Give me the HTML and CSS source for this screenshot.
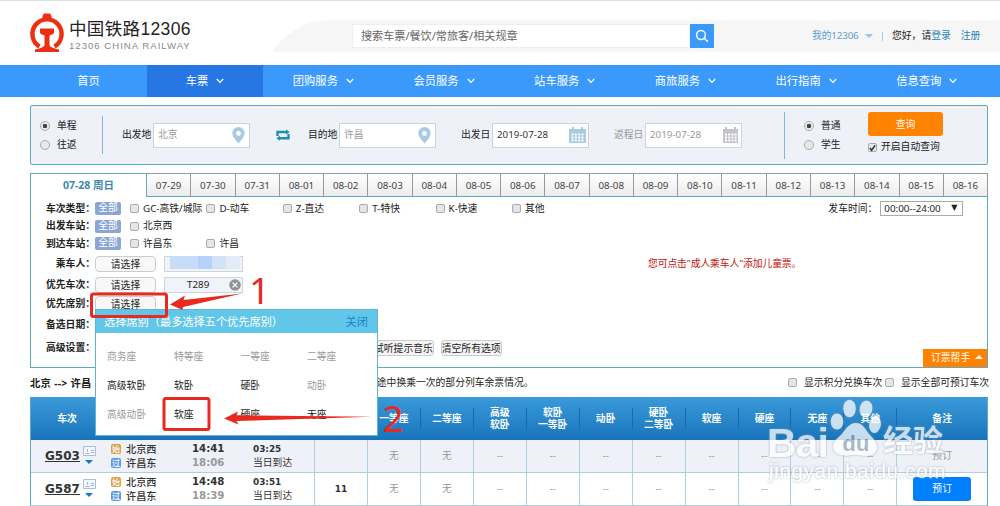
FILE: index.html
```html
<!DOCTYPE html>
<html lang="zh-CN">
<head>
    <meta charset="UTF-8">
    <meta name="viewport" content="width=device-width, initial-scale=1.0">
    <title>中国铁路12306</title>
    <link rel="stylesheet" href="styles.css">
</head>
<body>
    <div class="page">
        <header class="header">
            <div class="logo">
                <svg class="logo-icon" width="36" height="40" viewBox="0 0 36 40">
                    <path d="M10.500 33.500A14.600 14.600 0 1 1 25.500 33.500" fill="none" stroke="#ee2e12" stroke-width="4.400"/>
                    <path d="M15 .500h6l1.500 2.500v3h-9V3z" fill="#ee2e12"/>
                    <path d="M11 15.500h14v4q0 1.500-2 2l-2.500 1v10q1.500 2.500 9.500 4v2.500H6v-2.500q8-1.500 9.500-4v-10l-2.500-1q-2-.5-2-2z" fill="#ee2e12"/>
                </svg>
                <div class="logo-text">
                    <div class="logo-cn">中国铁路12306</div>
                    <div class="logo-en">12306 CHINA RAILWAY</div>
                </div>
            </div>
            <div class="header-band">
                <svg class="swoosh" width="80" height="32" viewBox="0 0 80 32"><path d="M0 32Q6 20 30 6Q40 0 64 0H80V32z" fill="#f6f6f6"/></svg>
                <div class="search">
                    <div class="search-input">搜索车票/餐饮/常旅客/相关规章</div>
                    <div class="search-btn">
                        <svg width="14" height="14" viewBox="0 0 14 14" fill="none" stroke="#fff" stroke-width="1.500"><circle cx="6" cy="6" r="4.400"/><path d="M9.200 9.200l3.600 3.600"/></svg>
                    </div>
                </div>
                <div class="user">
                    <span class="my">我的12306</span><i class="caret"></i><span class="sep"></span><span>您好，请</span><a>登录</a><a class="reg">注册</a>
                </div>
            </div>
        </header>

        <nav class="nav">
            <div class="nav-item home">首页</div>
            <div class="nav-item active">车票<svg class="chev" viewBox="0 0 8 6"><path d="M.8 1L4 4.400 7.200 1"/></svg></div>
            <div class="nav-item">团购服务<svg class="chev" viewBox="0 0 8 6"><path d="M.8 1L4 4.400 7.200 1"/></svg></div>
            <div class="nav-item">会员服务<svg class="chev" viewBox="0 0 8 6"><path d="M.8 1L4 4.400 7.200 1"/></svg></div>
            <div class="nav-item">站车服务<svg class="chev" viewBox="0 0 8 6"><path d="M.8 1L4 4.400 7.200 1"/></svg></div>
            <div class="nav-item">商旅服务<svg class="chev" viewBox="0 0 8 6"><path d="M.8 1L4 4.400 7.200 1"/></svg></div>
            <div class="nav-item">出行指南<svg class="chev" viewBox="0 0 8 6"><path d="M.8 1L4 4.400 7.200 1"/></svg></div>
            <div class="nav-item">信息查询<svg class="chev" viewBox="0 0 8 6"><path d="M.8 1L4 4.400 7.200 1"/></svg></div>
        </nav>

        <section class="query">
            <div class="radios trip">
                <label><i class="radio on"></i>单程</label>
                <label><i class="radio"></i>往返</label>
            </div>
            <div class="field from">
                <span>出发地</span>
                <div class="box">北京<svg class="pin" width="13" height="17" viewBox="0 0 13 17"><path fill-rule="evenodd" d="M6.500 0A6.200 6.200 0 0 1 12.700 6.200Q12.700 10 6.500 16.500Q.3 10 .3 6.200A6.200 6.200 0 0 1 6.500 0zM6.500 4a2.400 2.400 0 1 0 0 4.800a2.400 2.400 0 1 0 0-4.800z" fill="#a9cbe6"/></svg></div>
            </div>
            <svg class="swap" width="14" height="12" viewBox="0 0 14 12"><path d="M1.500 7V3H10.500M12.500 5v4.200H3.500" fill="none" stroke="#1f8fb0" stroke-width="2.400"/><path d="M10 .5L13.700 3 10 5.500zM4 6.700L.3 9.200 4 11.700z" fill="#1f8fb0"/></svg>
            <div class="field to">
                <span>目的地</span>
                <div class="box">许昌<svg class="pin" width="13" height="17" viewBox="0 0 13 17"><path fill-rule="evenodd" d="M6.500 0A6.200 6.200 0 0 1 12.700 6.200Q12.700 10 6.500 16.500Q.3 10 .3 6.200A6.200 6.200 0 0 1 6.500 0zM6.500 4a2.400 2.400 0 1 0 0 4.800a2.400 2.400 0 1 0 0-4.800z" fill="#a9cbe6"/></svg></div>
            </div>
            <div class="field date">
                <span>出发日</span>
                <div class="box dark">2019-07-28<svg class="cal" width="17" height="17" viewBox="0 0 17 17"><path d="M0 2h17v14H0zM3 0h2v3H3zM12 0h2v3h-2z" fill="#a9cbe0"/><path d="M2.500 7.500h12M2.500 10.500h12M2.500 13.500h12" stroke="#fff" stroke-width="1.800" stroke-dasharray="2 1.300"/></svg></div>
            </div>
            <div class="field back">
                <span>返程日</span>
                <div class="box">2019-07-28<svg class="cal" width="17" height="17" viewBox="0 0 17 17"><path d="M1 2h15v14H1zM3 0h2v3H3zM12 0h2v3h-2z" fill="#c2c2d0"/><path d="M3 7.500h12M3 10.500h12M3 13.500h12" stroke="#fff" stroke-width="1.800" stroke-dasharray="2 1.200"/></svg></div>
            </div>
            <div class="radios kind">
                <label><i class="radio on"></i>普通</label>
                <label><i class="radio"></i>学生</label>
            </div>
            <div class="submit">
                <div class="query-btn">查询</div>
                <label><i class="check"><svg width="8" height="8" viewBox="0 0 8 8"><path d="M1 4l2 2.500L7 1" fill="none" stroke="#333" stroke-width="1.800"/></svg></i>开启自动查询</label>
            </div>
        </section>

        <div class="tabs">
            <div class="tab current">07-28 周日</div>
            <div class="tab">07-29</div><div class="tab">07-30</div><div class="tab">07-31</div><div class="tab">08-01</div><div class="tab">08-02</div><div class="tab">08-03</div><div class="tab">08-04</div><div class="tab">08-05</div><div class="tab">08-06</div><div class="tab">08-07</div><div class="tab">08-08</div><div class="tab">08-09</div><div class="tab">08-10</div><div class="tab">08-11</div><div class="tab">08-12</div><div class="tab">08-13</div><div class="tab">08-14</div><div class="tab">08-15</div><div class="tab">08-16</div>
        </div>

        <section class="filters">
            <div class="row">
                <b>车次类型：</b><span class="all">全部</span>
                <label><i class="check"></i>GC-高铁/城际</label>
                <label><i class="check"></i>D-动车</label>
                <label><i class="check"></i>Z-直达</label>
                <label><i class="check"></i>T-特快</label>
                <label><i class="check"></i>K-快速</label>
                <label><i class="check"></i>其他</label>
                <div class="depart">发车时间：<div class="select">00:00--24:00<span>▼</span></div></div>
            </div>
            <div class="row">
                <b>出发车站：</b><span class="all">全部</span>
                <label><i class="check"></i>北京西</label>
            </div>
            <div class="row">
                <b>到达车站：</b><span class="all">全部</span>
                <label><i class="check"></i>许昌东</label>
                <label><i class="check"></i>许昌</label>
            </div>
            <div class="row r4">
                <b>乘车人：</b><span class="pick">请选择</span>
                <div class="chosen masked"><i></i><i></i><i></i><i></i><i></i></div>
                <span class="tip">您可点击"成人乘车人"添加儿童票。</span>
            </div>
            <div class="row r5">
                <b>优先车次：</b><span class="pick">请选择</span>
                <div class="chosen">T289<svg width="12" height="12" viewBox="0 0 12 12"><circle cx="6" cy="6" r="5.800" fill="#929292"/><path d="M3.600 3.600l4.800 4.800M8.400 3.600L3.600 8.400" stroke="#fff" stroke-width="1.300"/></svg></div>
            </div>
            <div class="row"><b>优先席别：</b><span class="pick">请选择</span></div>
            <div class="row r7"><b>备选日期：</b></div>
            <div class="row r8">
                <b>高级设置：</b>
                <span class="small-btn music">试听提示音乐</span>
                <span class="small-btn">清空所有选项</span>
            </div>
            <div class="helper">订票帮手<i></i></div>
        </section>

        <div class="summary">
            <b>北京 --&gt; 许昌</b>
            <span class="transfer">如途中换乘一次的部分列车余票情况。</span>
            <label><i class="check"></i>显示积分兑换车次</label>
            <label><i class="check"></i>显示全部可预订车次</label>
        </div>

        <div class="table">
            <div class="thead">
                <div>车次</div><div></div><div></div><div></div><div></div>
                <div>一等座</div><div>二等座</div><div>高级<br>软卧</div><div>软卧<br>一等卧</div><div>动卧</div><div>硬卧<br>二等卧</div><div>软座</div><div>硬座</div><div>无座</div><div>其他</div><div>备注</div>
            </div>
            <div class="trow odd">
                <div class="train"><a>G503</a><span class="marks"><svg width="13" height="10" viewBox="0 0 13 10"><path d="M.5.5h12v9H.5z" fill="#f5f8ff" stroke="#a9bedb"/><path d="M2.500 7.500h4M4.500 3v3M8 4.500h3M8 6.500h3" stroke="#9db6d6" fill="none"/></svg><i></i></span></div>
                <div class="stations"><div><i class="start">始</i>北京西</div><div><i class="pass">过</i>许昌东</div></div>
                <div class="times"><div>14:41</div><div class="arrive">18:06</div></div>
                <div class="lasts"><div><b>03:25</b></div><div>当日到达</div></div>
                <div></div><div>无</div><div>无</div><div>--</div><div>--</div><div>--</div><div>--</div><div>--</div><div>--</div><div>--</div><div>--</div><div>预订</div>
            </div>
            <div class="trow">
                <div class="train"><a>G587</a><span class="marks"><svg width="13" height="10" viewBox="0 0 13 10"><path d="M.5.5h12v9H.5z" fill="#f5f8ff" stroke="#a9bedb"/><path d="M2.500 7.500h4M4.500 3v3M8 4.500h3M8 6.500h3" stroke="#9db6d6" fill="none"/></svg><i></i></span></div>
                <div class="stations"><div><i class="start">始</i>北京西</div><div><i class="pass">过</i>许昌东</div></div>
                <div class="times"><div>14:48</div><div class="arrive">18:39</div></div>
                <div class="lasts"><div><b>03:51</b></div><div>当日到达</div></div>
                <div class="count">11</div><div>无</div><div>无</div><div>--</div><div>--</div><div>--</div><div>--</div><div>--</div><div>--</div><div>--</div><div>--</div><div><span class="book">预订</span></div>
            </div>
        </div>

        <div class="popup">
            <div class="popup-head"><span>选择席别（最多选择五个优先席别）</span><a>关闭</a></div>
            <div class="seats">
                <span class="off">商务座</span><span class="off">特等座</span><span class="off">一等座</span><span class="off">二等座</span>
                <span>高级软卧</span><span>软卧</span><span>硬卧</span><span class="off">动卧</span>
                <span class="off">高级动卧</span><span>软座</span><span>硬座</span><span>无座</span>
            </div>
        </div>

        <!-- step marks -->
        <svg class="steps" width="1000" height="506" viewBox="0 0 1000 506">
            <g fill="none" stroke="#e8291f" stroke-width="3">
                <rect x="91.500" y="294" width="75" height="22.500" rx="2"/>
                <rect x="164" y="398.500" width="45" height="31" rx="2"/>
            </g>
            <g fill="#e8291f">
                <path d="M170 304.500L185 295.500 183.500 300 242 293.500 183 307 182.500 310z"/>
                <path d="M224 418.500L238 411.500 236.500 415.200 372 416.800 236.500 421 238.500 424.500z"/>
                <text x="249" y="304" class="num">1</text>
                <text x="382.500" y="432" class="num">2</text>
            </g>
        </svg>

        <div class="watermark">
            <div class="brand">
                <span class="bai">Bai</span>
                <svg width="51" height="58" viewBox="0 0 51 58" fill="#fff">
                    <ellipse cx="7" cy="22.500" rx="6.300" ry="8"/><ellipse cx="19.500" cy="9.500" rx="6.300" ry="8.800"/><ellipse cx="36" cy="10" rx="6.300" ry="8.500" transform="rotate(10 36 10)"/><ellipse cx="45" cy="25.500" rx="5.800" ry="8.500" transform="rotate(8 45 25.500)"/>
                    <path d="M26 24c7 0 9 6 13 11c6 6 9 10 8 15c-2 7-9 8-18 6q-3-.5-6 0c-10 2-18 0-20-7c-1-6 4-9 9-14c4-5 7-11 14-11z"/>
                    <text x="26" y="52" text-anchor="middle" class="du">du</text>
                </svg>
                <span class="jing">经验</span>
            </div>
            <div class="url">jingyan.baidu.com</div>
        </div>
    </div>
</body>
</html>
```
FILE: styles.css
```css
* {
    box-sizing: border-box;
}
body {
    margin: 0;
    font-family: "Noto Sans", "Noto Sans CJK SC", sans-serif;
    font-size: 9.8px;
    line-height: 12px;
    color: #222;
    background: #fff;
}
i {
    font-style: normal;
}
.page {
    position: relative;
    width: 1000px;
    height: 506px;
    overflow: hidden;
}
.header {
    display: flex;
    height: 65px;
    border-top: 1px solid #ddd;
}
.logo {
    display: flex;
    width: 272px;
    padding: 12px 0 0 29px;
}
.logo-text {
    padding: 5px 0 0 4px;
    white-space: nowrap;
}
.logo-cn {
    font-family: "Liberation Sans", "Noto Sans CJK SC", sans-serif;
    font-size: 17.5px;
    line-height: 22px;
    letter-spacing: 0.35px;
    color: #222;
}
.logo-en {
    font-family: "Liberation Sans", sans-serif;
    font-size: 9.6px;
    line-height: 12px;
    letter-spacing: 1px;
    color: #888;
}
.header-band {
    display: flex;
    align-items: center;
    width: 728px;
    height: 32px;
    margin-top: 19px;
    background: linear-gradient(90deg, #fff 79px, #f6f6f6 79px);
}
.search {
    display: flex;
    width: 362px;
    height: 24px;
}
.search-input {
    flex: 1;
    padding-left: 8px;
    border: 1px solid #eee;
    background: #fff;
    font-size: 11.1px;
    line-height: 22px;
    color: #666;
}
.search-btn {
    display: flex;
    align-items: center;
    justify-content: center;
    width: 24px;
    background: #3b99fc;
}
.user {
    display: flex;
    align-items: center;
    margin-left: 98px;
    white-space: nowrap;
}
.user .my {
    width: 47px;
    color: #5d9fd0;
    letter-spacing: -0.15px;
}
.user a {
    color: #2a83b8;
}
.user .reg {
    margin-left: 10px;
}
.caret {
    margin-left: 6px;
    border: 4px solid transparent;
    border-top-color: #9cc6e0;
    border-bottom: 0;
}
.sep {
    width: 1px;
    height: 9px;
    margin: 0 9px;
    background: #a9cfe6;
}
.nav {
    display: flex;
    height: 32px;
    background: #3b99fc;
    color: #fff;
    font-size: 11.3px;
}
.nav-item {
    display: flex;
    align-items: center;
    justify-content: center;
    width: 120.7px;
}
.nav-item.home {
    width: 147px;
    padding-left: 30px;
}
.nav-item.active {
    width: 116px;
    background: #2676e3;
}
.chev {
    width: 8px;
    height: 6px;
    margin-left: 8px;
    fill: none;
    stroke: #fff;
    stroke-width: 1.3;
}
.query {
    display: flex;
    align-items: center;
    width: 958px;
    height: 60px;
    margin: 8px 0 8px 30px;
    border: 1px solid #5fa9c6;
    border-radius: 2px;
    background: #eef1f8;
}
.query label {
    display: flex;
    align-items: center;
    white-space: nowrap;
}
.radios {
    display: flex;
    flex-direction: column;
    gap: 7px;
}
.trip {
    width: 72px;
    height: 38px;
    padding-left: 9px;
    border-right: 1px solid #7dbad3;
    justify-content: center;
}
.kind {
    height: 47px;
    width: 84px;
    margin-left: 42px;
    padding-left: 19px;
    border-left: 1px solid #7dbad3;
    justify-content: center;
}
.radio {
    width: 10px;
    height: 10px;
    margin-right: 7px;
    border: 1px solid #aaa;
    border-radius: 50%;
    background: #e8e8e8;
}
.radio.on {
    background: radial-gradient(circle, #444 0 2px, #eee 2.6px);
}
.field {
    display: flex;
    align-items: center;
    white-space: nowrap;
}
.from {
    margin-left: 19px;
}
.swap {
    margin: 0 18px 0 26px;
}
.date,
.back {
    margin-left: 25px;
}
.field > span {
    width: 31px;
}
.back > span {
    color: #999;
}
.box {
    display: flex;
    align-items: center;
    justify-content: space-between;
    width: 97px;
    height: 25px;
    padding: 0 4px;
    border: 1px solid #cfd3d8;
    background: #fff;
    color: #999;
}
.box.dark {
    color: #333;
}
.box .cal {
    margin-right: -2px;
}
.submit label {
    margin-top: 5px;
}
.submit .check {
    margin-right: 4px;
}
.query-btn {
    width: 75px;
    height: 24px;
    margin-top: -5px;
    border-radius: 3px;
    background: #ff8201;
    color: #fff;
    line-height: 25px;
    text-align: center;
}
.check {
    display: flex;
    flex: none;
    width: 9px;
    height: 9px;
    margin-right: 4px;
    border: 1px solid #aaa;
    border-radius: 2px;
    background: #e6e6e6;
}
.tabs {
    display: flex;
    width: 958px;
    height: 24px;
    margin-left: 30px;
}
.tab {
    flex: 1;
    border: solid #999;
    border-width: 1px 1px 1px 0;
    border-bottom-color: #5fa9c6;
    background: linear-gradient(#fff, #ececec);
    line-height: 23px;
    text-align: center;
    color: #444;
}
.tab.current {
    flex: none;
    width: 117px;
    border: 1px solid #5fa9c6;
    border-bottom: 0;
    background: #fff;
    color: #3f87b0;
    font-size: 10.5px;
    font-weight: bold;
}
.filters {
    position: relative;
    width: 958px;
    height: 171px;
    margin-left: 30px;
    padding-top: 3px;
    border: 1px solid #5fa9c6;
    border-top: 0;
}
.row {
    display: flex;
    align-items: center;
    height: 17.5px;
    white-space: nowrap;
}
.row.r4 {
    height: 22.5px;
}
.row.r5 {
    height: 20px;
}
.row.r7 {
    height: 24.5px;
}
.row.r8 {
    height: 22px;
}
.row b {
    width: 64px;
    text-align: right;
}
.row label {
    display: flex;
    align-items: center;
    width: 76.4px;
}
.all {
    width: 26px;
    height: 13px;
    margin-right: 9px;
    border-radius: 2px;
    background: #8ba5d5;
    color: #fff;
    text-align: center;
}
.depart {
    display: flex;
    align-items: center;
    margin-left: 240px;
}
.select {
    display: flex;
    justify-content: space-between;
    width: 83px;
    height: 15px;
    margin-left: 3px;
    padding: 0 5px 0 3px;
    border: 1px solid #aaa;
    line-height: 14px;
}
.select span {
    font-family: "DejaVu Sans", sans-serif;
    font-size: 8px;
    line-height: 12px;
}
.pick {
    width: 61px;
    height: 16px;
    border: 1px solid #ccc;
    border-radius: 4px;
    background: #f8f8f8;
    line-height: 15px;
    text-align: center;
}
.chosen {
    display: flex;
    align-items: center;
    justify-content: space-between;
    width: 79px;
    height: 16px;
    margin-left: 8px;
    padding: 0 1px 0 22px;
    border: 1px solid #d0d5db;
    background: #f0f3f9;
}
.masked {
    padding: 0 2px 2px 5px;
    justify-content: flex-start;
}
.masked i {
    width: 14px;
    height: 13px;
    background: #c7dcf9;
}
.masked i:nth-child(3) {
    background: #b6d2fa;
}
.masked i:nth-child(4) {
    background: #d4e2f8;
}
.masked i:nth-child(5) {
    background: #e4ebf7;
}
.tip {
    margin-left: 405px;
    color: #c1140c;
    letter-spacing: -0.1px;
}
.small-btn {
    height: 16px;
    margin-left: 7px;
    border: 1px solid #ccc;
    border-radius: 3px;
    background: #f4f4f4;
    line-height: 15px;
}
.music {
    margin-left: 278px;
}
.helper {
    position: absolute;
    right: 0;
    bottom: 0;
    width: 64px;
    height: 18px;
    padding-left: 8px;
    background: #ff8201;
    color: #fff;
    line-height: 18px;
}
.helper i {
    display: inline-block;
    margin: 0 0 2px 5px;
    border: 4px solid transparent;
    border-bottom-color: #fff;
    border-top: 0;
}
.summary {
    display: flex;
    align-items: center;
    width: 958px;
    height: 29px;
    margin-left: 30px;
    white-space: nowrap;
}
.summary b {
    width: 337px;
    font-size: 10.3px;
    letter-spacing: 0.3px;
}
.transfer {
    width: 421px;
}
.summary label {
    display: flex;
    align-items: center;
    width: 97px;
}
.summary .check {
    margin-right: 7px;
}
.table {
    width: 958px;
    margin-left: 30px;
    border: solid #5fa9c6;
    border-width: 0 1px;
}
.thead,
.trow {
    display: grid;
    grid-template-columns: 73px 80px 57px 74px repeat(11, 52.95px) 1fr;
}
.thead {
    height: 43px;
    background: linear-gradient(#3a9ad9, #1a76bd);
    border-bottom: 2px solid #1b72b4;
    color: #fff;
    font-weight: bold;
}
.thead > div {
    display: flex;
    align-items: center;
    justify-content: center;
    height: 21px;
    margin-top: 11px;
    text-align: center;
    border-right: 1px solid #1a69ad;
    white-space: nowrap;
}
.thead > div:last-child {
    border: 0;
}
.trow {
    height: 33px;
    border-bottom: 1px solid #b0cedd;
}
.trow.odd {
    background: #eef1f8;
}
.trow > div {
    display: flex;
    align-items: center;
    justify-content: center;
    border-right: 1px solid #b0cedd;
    color: #999;
}
.trow > div:nth-child(-n+3),
.trow > div:last-child {
    border-right: 0;
}
.trow > .train {
    justify-content: flex-start;
    padding-left: 14px;
}
.train a {
    color: #333;
    font-family: "DejaVu Sans", sans-serif;
    font-size: 12px;
    font-weight: bold;
    text-decoration: underline;
}
.marks {
    display: flex;
    flex-direction: column;
    align-items: center;
    gap: 4px;
    margin: -3px 0 0 3px;
}
.marks i {
    border: 4px solid transparent;
    border-top-color: #1678c8;
    border-bottom: 0;
}
.trow > .stations,
.trow > .times,
.trow > .lasts {
    flex-direction: column;
    align-items: flex-start;
    gap: 2px;
    color: #333;
    white-space: nowrap;
}
.trow > .stations {
    padding-left: 7px;
    font-size: 10.2px;
    font-weight: 500;
}
.stations div {
    display: flex;
    align-items: center;
}
.stations i {
    width: 10px;
    height: 10px;
    margin-right: 5px;
    border-radius: 2px;
    color: #fff;
    font-size: 8px;
    line-height: 10px;
    text-align: center;
}
.start {
    background: #dba049;
}
.pass {
    background: #5b9ae0;
}
.trow > .times {
    padding-left: 8px;
    font-family: "DejaVu Sans", sans-serif;
    font-size: 10.2px;
    font-weight: bold;
}
.times .arrive {
    color: #999;
}
.trow > .lasts {
    padding-left: 12px;
}
.lasts b {
    font-family: "DejaVu Sans", sans-serif;
    font-size: 8.9px;
}
.trow > .count {
    color: #333;
    font-family: "DejaVu Sans", sans-serif;
    font-weight: bold;
    font-size: 9px;
}
.book {
    width: 58px;
    height: 24px;
    border-radius: 3px;
    background: #0080ff;
    color: #fff;
    line-height: 24px;
    text-align: center;
}
.popup {
    position: absolute;
    left: 95px;
    top: 309px;
    width: 283px;
    height: 127px;
    border: 1px solid #5fb4d5;
    background: #fff;
}
.popup-head {
    display: flex;
    justify-content: space-between;
    height: 23px;
    padding: 0 9px 0 8px;
    background: #62c6e8;
    color: #fff;
    font-size: 11.2px;
    line-height: 24px;
}
.popup-head a {
    color: #1683cf;
}
.seats {
    display: grid;
    grid-template-columns: 67px repeat(3, 66.5px);
    grid-auto-rows: 29px;
    padding: 9px 0 0 11px;
    line-height: 29px;
}
.off {
    color: #999;
}
.steps {
    position: absolute;
    left: 0;
    top: 0;
}
.num {
    font-family: "Noto Sans", sans-serif;
    font-size: 37px;
}
.watermark {
    position: absolute;
    left: 767px;
    top: 399px;
    width: 190px;
    color: #fff;
    opacity: 0.75;
    white-space: nowrap;
    filter: drop-shadow(0 0 1px #8a98a8);
}
.brand {
    display: flex;
    align-items: flex-end;
    height: 58px;
}
.bai {
    width: 63px;
    font-family: "Liberation Sans", sans-serif;
    font-size: 41px;
    font-weight: bold;
    line-height: 42px;
    letter-spacing: -1px;
    margin-bottom: -7px;
}
.du {
    fill: #93a7bc;
    font-family: "Liberation Sans", sans-serif;
    font-size: 22px;
    font-weight: bold;
}
.jing {
    margin-left: 2px;
    font-size: 30px;
    line-height: 34px;
    font-weight: bold;
}
.url {
    padding-left: 2px;
    font-family: "Liberation Sans", sans-serif;
    font-size: 20.5px;
    line-height: 24px;
    letter-spacing: 0.7px;
    margin-top: 2px;
    -webkit-text-stroke: 0.4px #fff;
}
```
